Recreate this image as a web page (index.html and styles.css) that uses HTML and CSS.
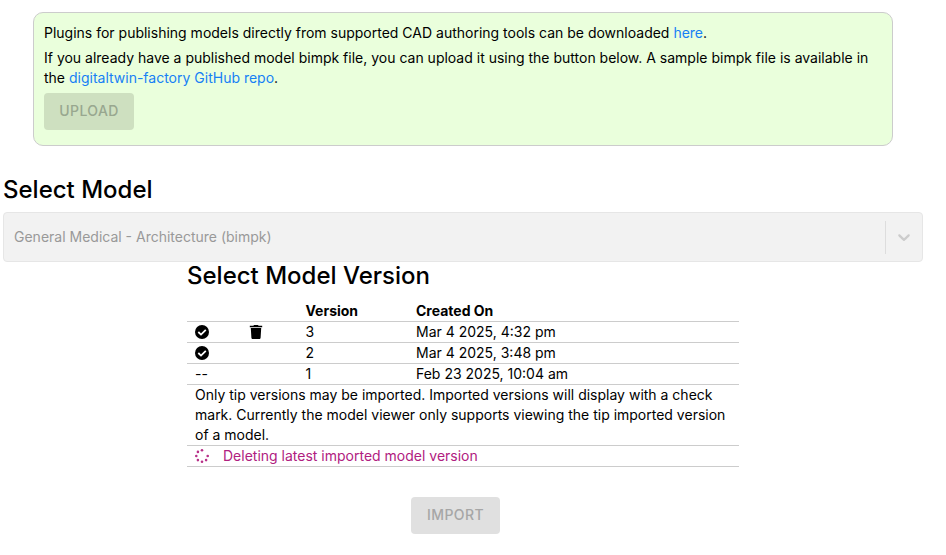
FILE: index.html
```html
<!DOCTYPE html>
<html lang="en">
<head>
<meta charset="utf-8">
<title>Select Model</title>
<link rel="stylesheet" href="styles.css">
</head>
<body>
<section class="notice">
  <p>Plugins for publishing models directly from supported CAD authoring tools can be downloaded <a href="#">here</a>.</p>
  <p>If you already have a published model bimpk file, you can upload it using the button below. A sample bimpk file is available in the <a href="#">digitaltwin-factory GitHub repo</a>.</p>
  <button class="button upload" disabled>UPLOAD</button>
</section>
<main>
  <h1>Select Model</h1>
  <div class="select">
    <span class="value">General Medical - Architecture (bimpk)</span>
    <span class="separator"></span>
    <svg class="chevron" viewBox="0 0 20 20"><path d="M4.516 7.548c0.436-0.446 1.043-0.481 1.576 0l3.908 3.747 3.908-3.747c0.533-0.481 1.141-0.446 1.574 0 0.436 0.445 0.408 1.197 0 1.615-0.406 0.418-4.695 4.502-4.695 4.502-0.217 0.223-0.502 0.335-0.787 0.335s-0.57-0.112-0.789-0.335c0 0-4.287-4.084-4.695-4.502s-0.436-1.17 0-1.615z"/></svg>
  </div>
  <div class="versions">
    <h2>Select Model Version</h2>
    <div class="row head"><span></span><span></span><span>Version</span><span>Created On</span></div>
    <div class="row">
      <span><svg class="icon" viewBox="0 0 14 14"><circle cx="7" cy="7" r="7"/><path class="tick" d="M3.3 7l2.7 2.6 4.8-4.7"/></svg></span>
      <span><svg class="icon trash" viewBox="0 0 14 14"><path d="M.8 .8h3.6L5 0h4l.6.8h3.6v1.5H.8zM1.8 3h10.4l-.6 9.8c-.1.8-.6 1.2-1.3 1.2H3.7c-.7 0-1.2-.4-1.3-1.2z"/></svg></span>
      <span>3</span><span>Mar 4 2025, 4:32 pm</span>
    </div>
    <div class="row">
      <span><svg class="icon" viewBox="0 0 14 14"><circle cx="7" cy="7" r="7"/><path class="tick" d="M3.3 7l2.7 2.6 4.8-4.7"/></svg></span>
      <span></span><span>2</span><span>Mar 4 2025, 3:48 pm</span>
    </div>
    <div class="row"><span>--</span><span></span><span>1</span><span>Feb 23 2025, 10:04 am</span></div>
    <p class="note">Only tip versions may be imported. Imported versions will display with a check mark. Currently the model viewer only supports viewing the tip imported version of a model.</p>
    <div class="status">
      <svg class="icon" viewBox="0 0 14 14"><circle cx="7" cy="1.3" r="1.3"/><circle cx="2.9" cy="2.9" r="1.3"/><circle cx="1.3" cy="7" r="1.3"/><circle cx="2.9" cy="11.1" r="1.3"/><circle cx="7" cy="12.7" r="1.3"/><circle cx="11.1" cy="11.1" r="1.3"/><circle cx="12.7" cy="7" r="1.3"/></svg>
      <span>Deleting latest imported model version</span>
    </div>
  </div>
  <button class="button import" disabled>IMPORT</button>
</main>
</body>
</html>
```
FILE: styles.css
```css
* { box-sizing: border-box; }
body { margin: 0; padding-top: 12px; background: #fff; color: #000; font: 14px/20px Inter, "Liberation Sans", sans-serif; }
p, h1, h2 { margin: 0; }
a { color: #1680f5; text-decoration: none; }
.notice { width: 860px; height: 134px; margin-left: 33px; padding: 10px; border: 1px solid #ccc; border-radius: 10px; background: #eaffdc; }
.notice p { margin-bottom: 5px; }
.button { display: block; height: 37px; padding: 0 0 1px; border: 0; border-radius: 4px; font: 450 14px/36px Inter, "Liberation Sans", sans-serif; letter-spacing: .4px; }
.upload { width: 90px; background: #cee0c0; color: #98a78f; }
main { width: 920px; margin: 29px 0 0 3px; }
h1, h2 { font-size: 24px; line-height: 29px; font-weight: 500; }
h2 { height: 29px; line-height: 27px; }
.select { display: flex; align-items: center; height: 50px; margin-top: 8px; padding-left: 10px; border: 1px solid #e6e6e6; border-radius: 4px; background: #f2f2f2; color: #999; }
.value { flex: 1; }
.separator { width: 1px; height: 33px; background: #ddd; }
.chevron { width: 20px; height: 20px; margin: 0 8px; fill: #ccc; }
.versions { width: 552px; margin-left: 184px; }
.row { display: grid; grid-template-columns: 55px 55.5px 110.5px 1fr; height: 21px; padding-left: 8px; border-bottom: 1px solid #ccc; }
.head { height: 31px; padding-top: 10px; font-weight: 700; }
.icon { display: block; width: 14px; height: 14px; margin-top: 3px; }
.trash { margin-left: -1px; }
.tick { fill: none; stroke: #fff; stroke-width: 1.8; }
.note { padding: 0 8px; border-bottom: 1px solid #ccc; }
.status { display: flex; gap: 14px; height: 21px; padding-left: 8px; border-bottom: 1px solid #ccc; color: #b02080; fill: #b83088; }
.import { width: 89px; margin: 30px 0 0 408px; background: #e0e0e0; color: #a6a6a6; }
```
